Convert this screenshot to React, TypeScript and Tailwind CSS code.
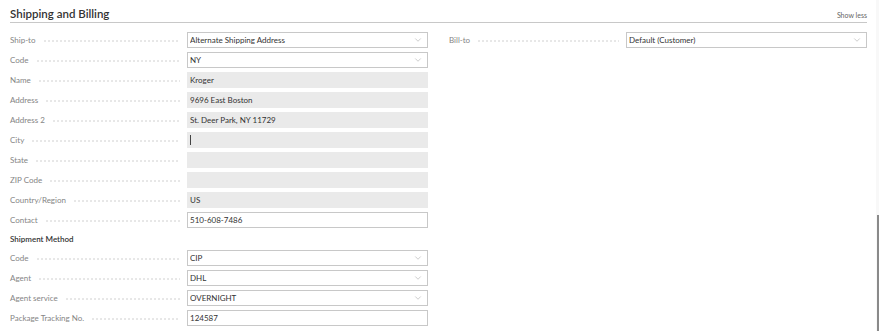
import { ChevronDown } from 'lucide-react';

type Field = {
  label: string;
  value?: string;
  kind: 'select' | 'readonly' | 'input';
  caret?: boolean;
};

const shipTo: Field[] = [
  { label: 'Ship-to', value: 'Alternate Shipping Address', kind: 'select' },
  { label: 'Code', value: 'NY', kind: 'select' },
  { label: 'Name', value: 'Kroger', kind: 'readonly' },
  { label: 'Address', value: '9696 East Boston', kind: 'readonly' },
  { label: 'Address 2', value: 'St. Deer Park, NY 11729', kind: 'readonly' },
  { label: 'City', kind: 'readonly', caret: true },
  { label: 'State', kind: 'readonly' },
  { label: 'ZIP Code', kind: 'readonly' },
  { label: 'Country/Region', value: 'US', kind: 'readonly' },
  { label: 'Contact', value: '510-608-7486', kind: 'input' },
];

const shipment: Field[] = [
  { label: 'Code', value: 'CIP', kind: 'select' },
  { label: 'Agent', value: 'DHL', kind: 'select' },
  { label: 'Agent service', value: 'OVERNIGHT', kind: 'select' },
  { label: 'Package Tracking No.', value: '124587', kind: 'input' },
];

function Row({ field }: { field: Field }) {
  const box =
    field.kind === 'readonly'
      ? 'bg-[#eaeaea] border border-[#eaeaea]'
      : 'bg-white border border-[#c8c8c8]';

  return (
    <div className="flex h-5 items-center">
      <div className="flex w-[177px] shrink-0 items-center pr-[7px]">
        <span className="whitespace-nowrap text-[#858585]">{field.label}</span>
        {/* dotted leader */}
        <span className="ml-[7px] mt-[2px] h-[2px] flex-1 bg-[radial-gradient(circle,#cbcbcb_0.6px,transparent_0.8px)] bg-[length:4px_2px]" />
      </div>
      <div className={`flex h-4 flex-1 items-center pl-[2px] pr-[4px] ${box}`}>
        {field.caret && <span className="h-[10px] w-px bg-[#444]" />}
        <span className="flex-1 truncate text-[#333]">{field.value}</span>
        {field.kind === 'select' && (
          <ChevronDown size={10} strokeWidth={1.2} className="text-[#9a9a9a]" />
        )}
      </div>
    </div>
  );
}

export default function App() {
  return (
    <div
      className="flex h-[331px] w-[879px] overflow-hidden bg-white text-[8px]"
      style={{ fontFamily: 'Lato, "Open Sans", sans-serif' }}
    >
      <div className="flex-1 pl-[10px] pr-[9px]">
        {/* Header */}
        <div className="flex h-[23px] items-end justify-between border-b border-[#c8c8c8] pb-[3px]">
          <h2 className="text-[11.5px] font-semibold leading-none text-[#333]">
            Shipping and Billing
          </h2>
          <span className="text-[7px] leading-none text-[#666]">Show less</span>
        </div>

        <div className="mt-[7px] flex gap-[21px]">
          {/* Left column */}
          <div className="w-[418px]">
            {shipTo.map((f) => (
              <Row key={f.label} field={f} />
            ))}
            <div className="flex h-[18px] items-center font-semibold text-[#333]">
              Shipment Method
            </div>
            {shipment.map((f) => (
              <Row key={f.label} field={f} />
            ))}
          </div>

          {/* Right column */}
          <div className="flex-1">
            <Row field={{ label: 'Bill-to', value: 'Default (Customer)', kind: 'select' }} />
          </div>
        </div>
      </div>

      {/* Scrollbar gutter */}
      <div className="flex w-[3px] flex-col bg-[#f8f8f8]">
        <div className="h-[215px]" />
        <div className="ml-[1px] w-[2px] flex-1 bg-[#8a8a8a]" />
      </div>
    </div>
  );
}
